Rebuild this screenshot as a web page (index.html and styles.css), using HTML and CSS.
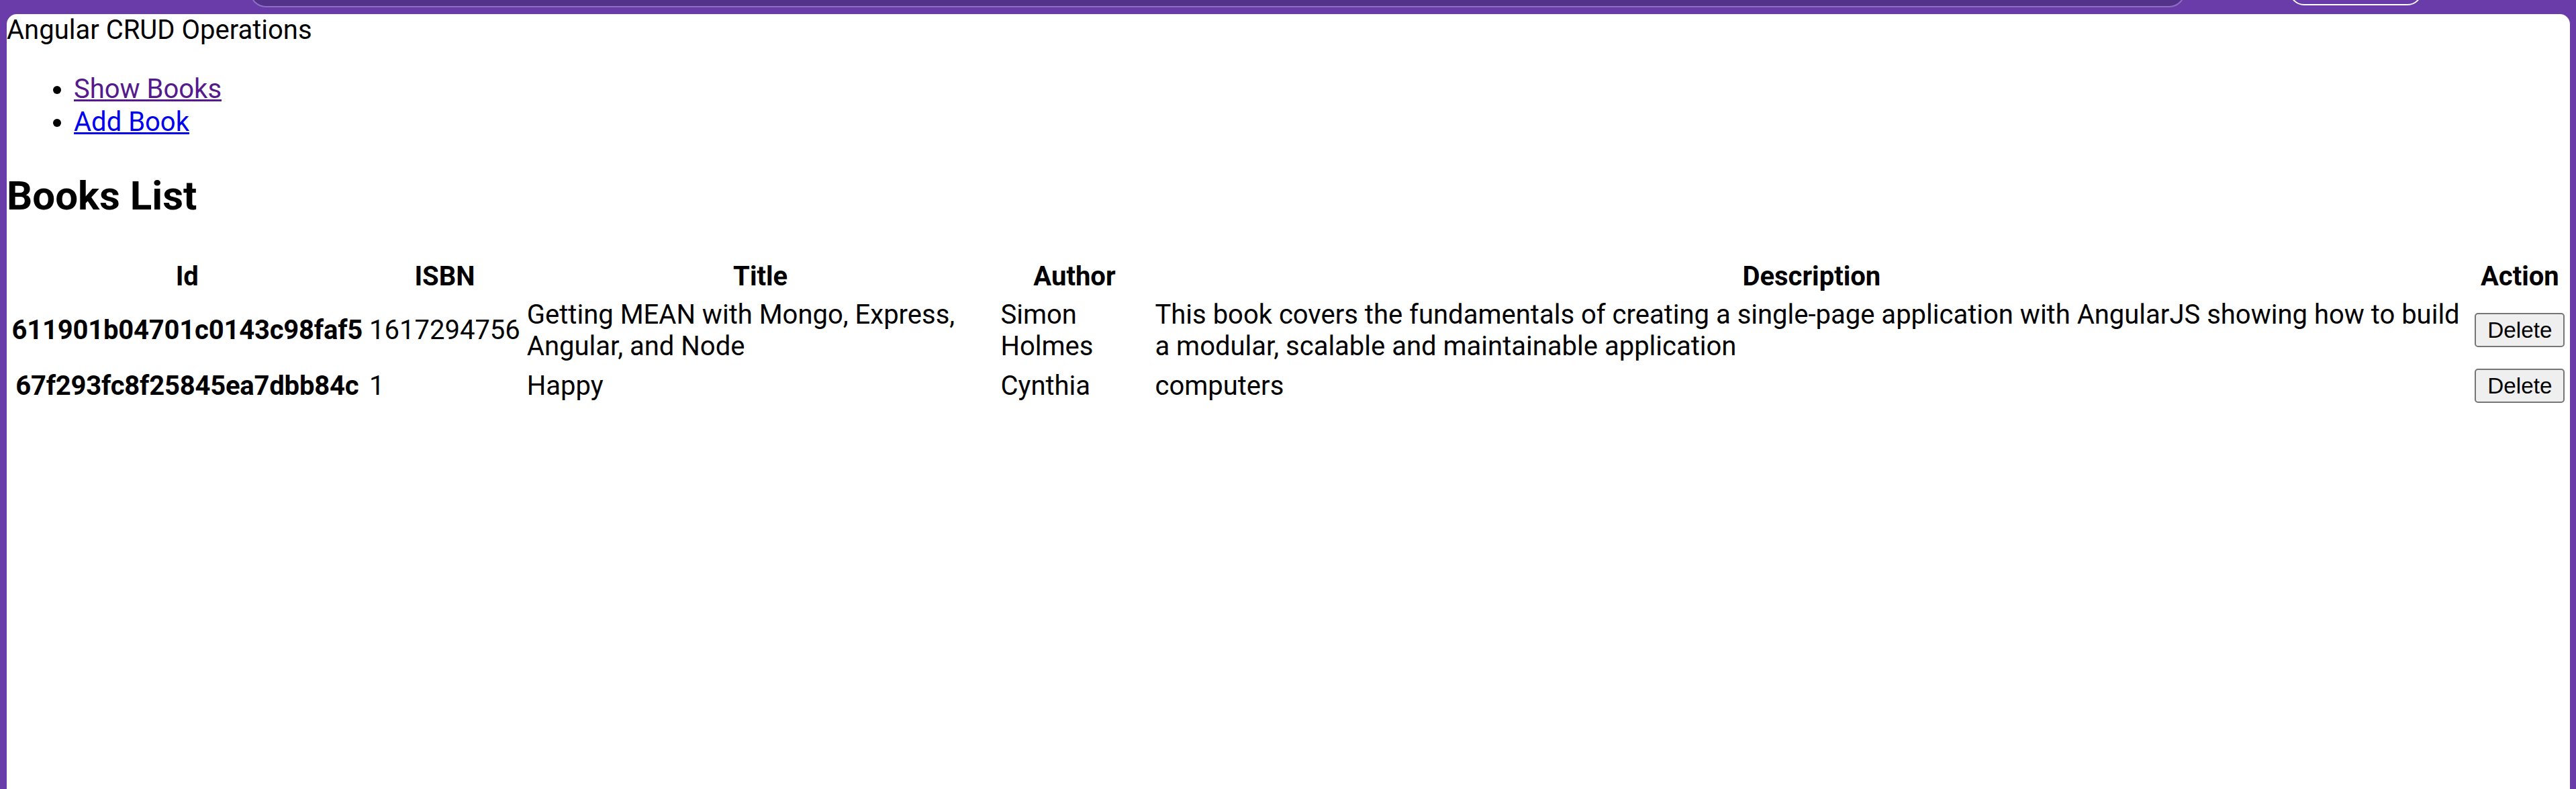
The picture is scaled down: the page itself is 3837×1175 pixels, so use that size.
FILE: index.html
```html
<!DOCTYPE html>
<html lang="en">
<head>
<meta charset="utf-8">
<title>Angular CRUD Operations</title>
<link rel="stylesheet" href="styles.css">
</head>
<body>
<div class="chrome">
  <div class="omnibox"></div>
  <div class="pill"></div>
</div>
<div class="window">
  <div class="app-title">Angular CRUD Operations</div>
  <ul class="nav">
    <li><a class="visited" href="#books">Show Books</a></li>
    <li><a href="#add">Add Book</a></li>
  </ul>
  <h2 class="heading">Books List</h2>
  <table class="books">
    <thead>
      <tr>
        <th>Id</th>
        <th>ISBN</th>
        <th>Title</th>
        <th>Author</th>
        <th>Description</th>
        <th>Action</th>
      </tr>
    </thead>
    <tbody>
      <tr>
        <th class="id">611901b04701c0143c98faf5</th>
        <td>1617294756</td>
        <td>Getting MEAN with Mongo, Express, Angular, and Node</td>
        <td>Simon Holmes</td>
        <td>This book covers the fundamentals of creating a single-page application with AngularJS showing how to build a modular, scalable and maintainable application</td>
        <td><button class="btn" type="button">Delete</button></td>
      </tr>
      <tr>
        <th class="id">67f293fc8f25845ea7dbb84c</th>
        <td>1</td>
        <td>Happy</td>
        <td>Cynthia</td>
        <td>computers</td>
        <td><button class="btn" type="button">Delete</button></td>
      </tr>
    </tbody>
  </table>
</div>
</body>
</html>
```
FILE: styles.css
```css
html, body {
  margin: 0;
  padding: 0;
}
body {
  background: #6a3caa;
  height: 1175px;
  overflow: hidden;
  font-family: Roboto, "Liberation Sans", sans-serif;
}
.chrome {
  height: 21px;
  display: flex;
  align-items: flex-end;
  overflow: hidden;
  padding-left: 372px;
}
.omnibox {
  flex: none;
  width: 2879px;
  height: 40px;
  margin-bottom: 10px;
  background: #53328a;
  border: 2px solid #8d70c2;
  border-top: none;
  border-radius: 0 0 24px 24px;
}
.pill {
  flex: none;
  width: 194px;
  height: 40px;
  margin-left: 155px;
  margin-bottom: 13px;
  border: 2px solid #ffffff;
  border-radius: 0 0 22px 22px;
}
.window {
  background: #ffffff;
  margin: 0 9px 0 10px;
  height: 1154px;
  border-radius: 15px 15px 0 0;
  color: #000;
  font-size: 40px;
}
.app-title {
  line-height: normal;
}
.nav {
  margin: 41px 0 39px;
  padding-left: 100px;
  line-height: 48.5px;
}
.nav a {
  color: #0000ee;
  text-decoration-thickness: 3px;
}
.nav a.visited {
  color: #551a8b;
}
.heading {
  font-size: 60px;
  font-weight: bold;
  margin: 50px 0 53px;
  padding-top: 0;
}
.books {
  border-spacing: 5px;
  border-collapse: separate;
}
.books th,
.books td {
  padding: 2.5px;
}
.books th {
  font-weight: bold;
  text-align: center;
}
.books th.id {
  letter-spacing: -0.2px;
}
.books td {
  text-align: left;
}
.btn {
  font-family: "Liberation Sans", Arial, sans-serif;
  font-size: 33.3px;
  padding: 4.5px 17px;
  background: #efefef;
  border: 2px solid #767676;
  border-radius: 5px;
  color: #000;
}
```
